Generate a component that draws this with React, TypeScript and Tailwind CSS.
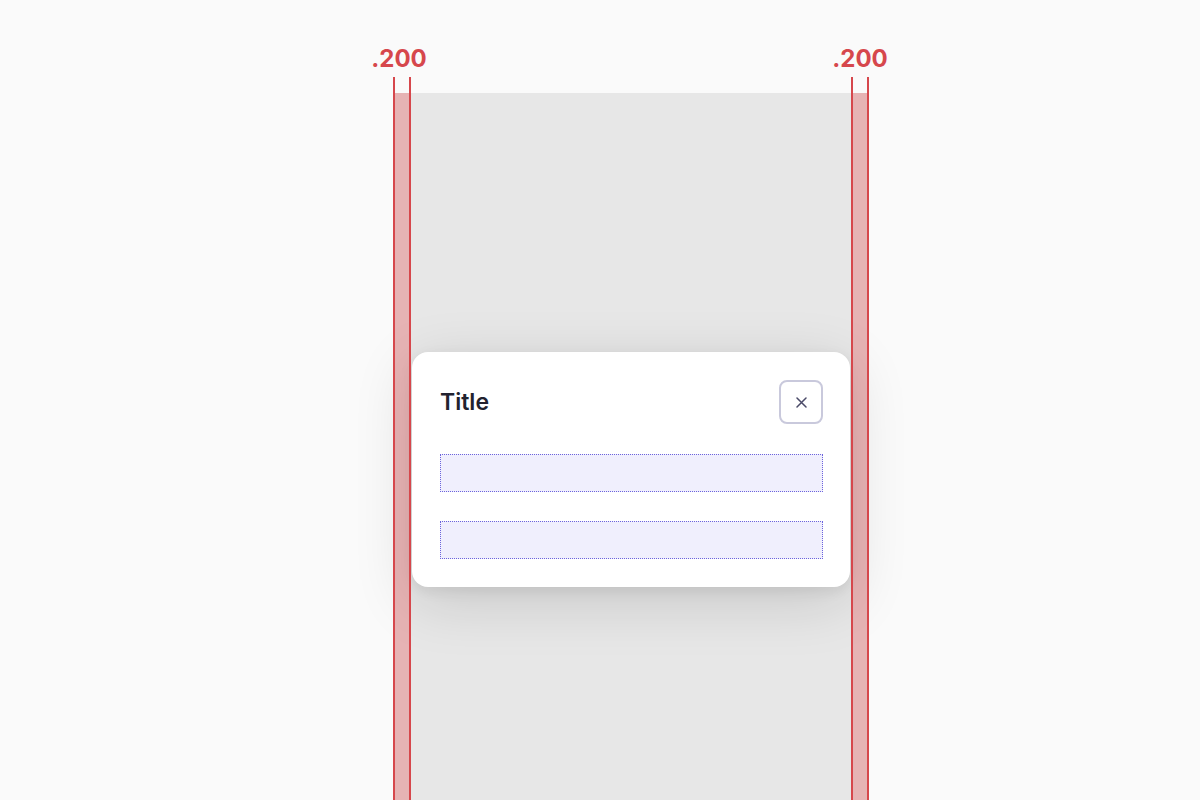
import React from "react";

const Band: React.FC<{ side: "left" | "right" }> = ({ side }) => (
  <div
    className={
      "absolute top-0 bottom-0 w-[18px] border-x-2 border-[#d6474c] flex flex-col " +
      (side === "left" ? "left-0" : "right-0")
    }
  >
    <div className="h-[16px] shrink-0" />
    <div className="flex-1 bg-[#e5484d]/[0.33]" />
  </div>
);

const Placeholder: React.FC = () => (
  <div className="h-[38px] w-full border border-dotted border-[#6c64dc] bg-[#f0effd]" />
);

export default function App() {
  return (
    <div
      className="h-screen overflow-hidden bg-[#fafafa] pl-[393px]"
      style={{ fontFamily: "Inter, 'Noto Sans', sans-serif" }}
    >
      <div className="w-[476px]">
        {/* spacing labels */}
        <div className="flex justify-between pt-[47px] mb-[6px]">
          <div className="w-[18px] flex justify-center">
            <span className="whitespace-nowrap mr-[6px] text-[24px] leading-6 font-bold text-[#d6474c]">.200</span>
          </div>
          <div className="w-[18px] flex justify-center">
            <span className="whitespace-nowrap text-[24px] leading-6 font-bold text-[#d6474c]">.200</span>
          </div>
        </div>

        <div className="relative">
          <div className="h-[16px]" />
          <div className="h-[753px] bg-[#e7e7e7] px-[19px] flex items-center">
            <div className="w-full bg-white rounded-2xl pl-[28px] pr-[27px] py-[28px] shadow-[0_14px_60px_rgba(0,0,0,0.14),0_4px_14px_rgba(0,0,0,0.07)]">
              <div className="flex items-center justify-between">
                <h2 className="text-[23px] font-semibold text-[#22222f]">Title</h2>
                <button className="w-11 h-11 rounded-lg border-2 border-[#c9c9dc] flex items-center justify-center">
                  <svg width="11" height="11" viewBox="0 0 11 11" fill="none">
                    <path d="M1 1L10 10M10 1L1 10" stroke="#4a4a68" strokeWidth="1.5" strokeLinecap="round" />
                  </svg>
                </button>
              </div>
              <div className="mt-[30px] flex flex-col gap-[29px]">
                <Placeholder />
                <Placeholder />
              </div>
            </div>
          </div>
          <Band side="left" />
          <Band side="right" />
        </div>
      </div>
    </div>
  );
}
